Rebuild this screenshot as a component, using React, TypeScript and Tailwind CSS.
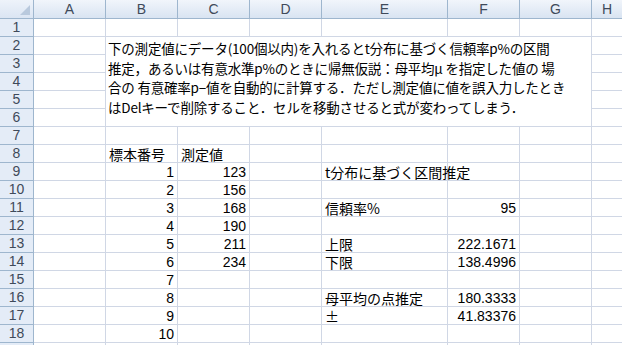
import React from "react";

const cols = ["A", "B", "C", "D", "E", "F", "G", "H"];

type Cell = { v: string; right?: boolean };

// sheet data keyed by row, then column letter
const data: Record<number, Record<string, Cell>> = {
  8: { B: { v: "標本番号" }, C: { v: "測定値" } },
  9: { B: { v: "1", right: true }, C: { v: "123", right: true }, E: { v: "t分布に基づく区間推定" } },
  10: { B: { v: "2", right: true }, C: { v: "156", right: true } },
  11: { B: { v: "3", right: true }, C: { v: "168", right: true }, E: { v: "信頼率%" }, F: { v: "95", right: true } },
  12: { B: { v: "4", right: true }, C: { v: "190", right: true } },
  13: { B: { v: "5", right: true }, C: { v: "211", right: true }, E: { v: "上限" }, F: { v: "222.1671", right: true } },
  14: { B: { v: "6", right: true }, C: { v: "234", right: true }, E: { v: "下限" }, F: { v: "138.4996", right: true } },
  15: { B: { v: "7", right: true } },
  16: { B: { v: "8", right: true }, E: { v: "母平均の点推定" }, F: { v: "180.3333", right: true } },
  17: { B: { v: "9", right: true }, E: { v: "±" }, F: { v: "41.83376", right: true } },
  18: { B: { v: "10", right: true } },
};

const noteLines = [
  "下の測定値にデータ(100個以内)を入れるとt分布に基づく信頼率p%の区間",
  "推定，あるいは有意水準p%のときに帰無仮説：母平均μ を指定した値の 場",
  "合の 有意確率p−値を自動的に計算する．ただし測定値に値を誤入力したとき",
  "はDelキーで削除すること．セルを移動させると式が変わってしまう．",
];

const inMerged = (r: number, c: string) => r >= 2 && r <= 6 && "BCDEFG".includes(c);

export default function App() {
  const rows = Array.from({ length: 19 }, (_, i) => i + 1);

  return (
    <div
      className="w-[622px] h-[345px] overflow-hidden bg-white text-black"
      style={{ fontFamily: '"Noto Sans CJK JP", "Liberation Sans", sans-serif' }}
    >
      <div className="grid grid-cols-[34px_72px_72px_72px_72px_126px_72px_72px_31px] grid-rows-[19px_repeat(19,18px)] text-[14px]">
        {/* merged note block B2:G6 */}
        <div className="col-start-3 col-span-6 row-start-3 row-span-5 border-r border-b border-[#d0d7e5] bg-white pl-[2px] pt-[2px] text-[13.5px] leading-[19.5px] tracking-[-0.2px]">
          {noteLines.map((l) => (
            <div key={l} className="whitespace-nowrap">{l}</div>
          ))}
        </div>

        {/* corner */}
        <div className="relative border-r border-b border-[#9eb6ce] bg-gradient-to-b from-[#eef3fa] to-[#dbe5f3]">
          <div className="absolute right-[3px] bottom-[3px] w-0 h-0 border-l-[10px] border-l-transparent border-b-[10px] border-b-[#b9c9dd]" />
        </div>
        {cols.map((c) => (
          <div
            key={c}
            className="flex items-center justify-center border-r border-b border-[#9eb6ce] bg-gradient-to-b from-[#f1f5fb] to-[#d9e4f2] font-['Liberation_Sans',sans-serif] text-[14px] text-[#3f4a5a] leading-[18px]"
          >
            {c}
          </div>
        ))}

        {rows.map((r) => (
          <React.Fragment key={r}>
            <div className="flex items-center justify-center border-r border-b border-[#9eb6ce] bg-[#e4ecf7] font-['Liberation_Sans',sans-serif] text-[14px] text-[#3f4a5a] leading-[17px]">
              {r < 19 ? r : ""}
            </div>
            {cols
              .filter((c) => !inMerged(r, c))
              .map((c) => {
                const cell = data[r]?.[c];
                return (
                  <div
                    key={c}
                    className={
                      "flex items-end border-r border-b border-[#d0d7e5] px-[3px] leading-[16px] whitespace-nowrap " +
                      (cell?.right
                        ? "justify-end font-['Liberation_Sans',sans-serif]"
                        : "justify-start overflow-visible")
                    }
                  >
                    {cell ? <span className="relative z-10">{cell.v}</span> : null}
                  </div>
                );
              })}
          </React.Fragment>
        ))}
      </div>
    </div>
  );
}
